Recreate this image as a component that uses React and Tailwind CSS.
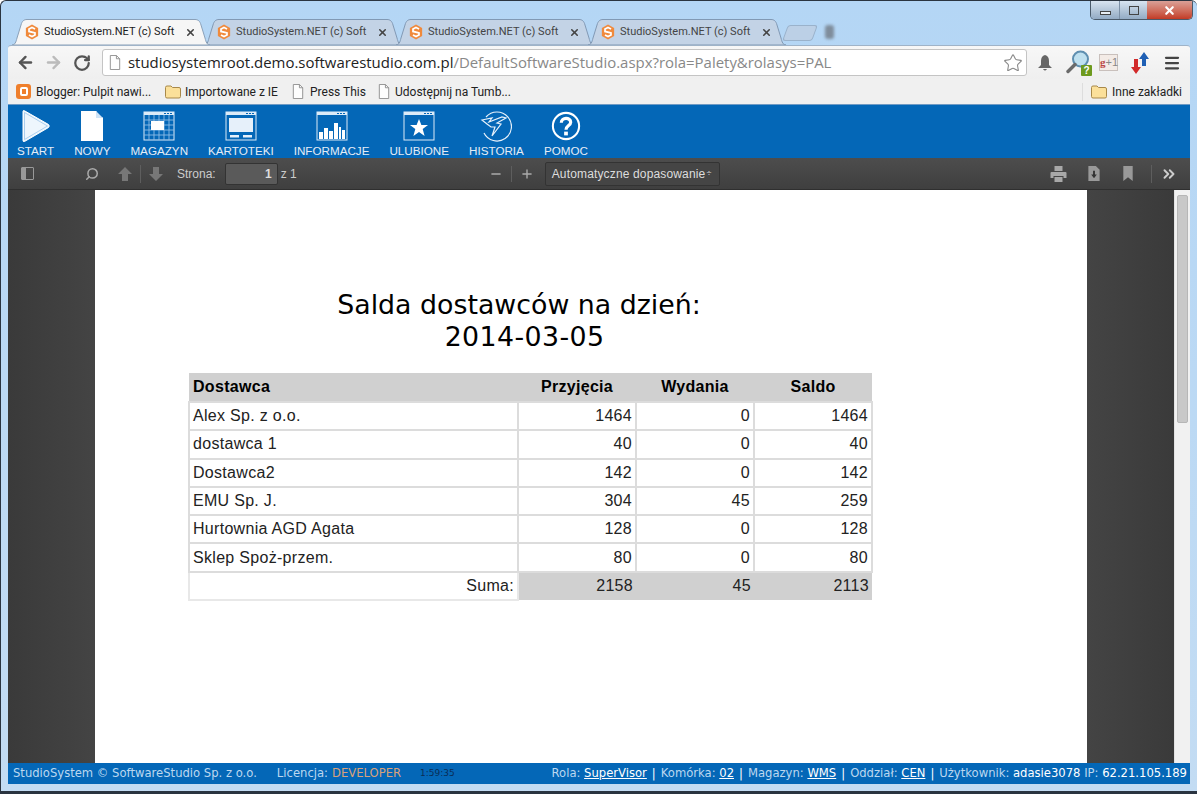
import React from "react";
import { ArrowLeft, ArrowRight, RotateCw, Star, Menu, Search, ChevronsRight, Minus, Plus, X } from "lucide-react";

const Logo = () => (
  <svg viewBox="0 0 16 18" className="w-[14px] h-[16px] shrink-0">
    <path d="M8 0.5 15 4.5V13.5L8 17.5 1 13.5V4.5Z" fill="#f08a3c" />
    <path d="M11.5 5.5 8 3.8 4.6 5.6V8.4L11.4 10V12.4L8 14.2 4.5 12.5" fill="none" stroke="#fff" strokeWidth="2" />
  </svg>
);

const PageGlyph = () => (
  <svg viewBox="0 0 12 16" className="w-[12px] h-[15px] shrink-0">
    <path d="M1 .5H7.5L11 4V15.5H1Z" fill="#fdfdfd" stroke="#8f8f8f" />
    <path d="M7.5 .5V4H11" fill="none" stroke="#8f8f8f" />
  </svg>
);

const FolderGlyph = () => (
  <svg viewBox="0 0 16 14" className="w-[16px] h-[14px] shrink-0">
    <path d="M.5 2.5Q.5 1 2 1H6L7.5 2.5H14Q15.5 2.5 15.5 4V11.5Q15.5 13 14 13H2Q.5 13 .5 11.5Z" fill="#fbe09a" stroke="#a8894a" />
  </svg>
);

const Tab = ({ active }) => (
  <div className={`relative h-[26px] w-[198px] -mr-[6px] flex items-center pl-[13px] pr-[14px] gap-[5px] ${active ? "z-10" : ""}`}>
    <svg viewBox="0 0 198 26" className="absolute inset-0 w-full h-full" preserveAspectRatio="none">
      <path
        d="M0 26C3 26 4 23 5 19L9 6C10 2 12 .5 15 .5H183C186 .5 188 2 189 6L193 19C194 23 195 26 198 26Z"
        fill={active ? "#f6f6f6" : "#c3d3e6"}
        stroke={active ? "#8aa0b8" : "#8199b4"}
      />
    </svg>
    <div className="relative"><Logo /></div>
    <span
      className={`relative w-[138px] whitespace-nowrap text-[11px] ${active ? "text-[#1b1b1b]" : "text-[#444]"}`}
      style={{ fontFamily: "Roboto, 'Noto Sans', sans-serif" }}
    >
      StudioSystem.NET (c) Soft
    </span>
    <X className="relative w-[11px] h-[11px] text-[#444] shrink-0" strokeWidth={3.5} />
  </div>
);

const WindowBox = ({ children }) => (
  <svg viewBox="0 0 32 32" className="w-[32px] h-[32px]">
    <rect x="1" y="2" width="30" height="28" fill="#0467b7" stroke="#dcebf8" />
    <rect x="1" y="2" width="30" height="3" fill="#dcebf8" />
    <path d="M21 3.5h2M24 3.5h2M27 3.5h2" stroke="#0467b7" strokeWidth="1.2" />
    {children}
  </svg>
);

const StartIcon = () => (
  <svg viewBox="0 0 30 34" className="w-[30px] h-[34px]">
    <path d="M2 2.5Q2 1 3.5 1.8L27.5 15.5Q29 17 27.5 18.5L3.5 32.5Q2 33 2 31.5Z" fill="#eef6fd" stroke="#fff" strokeWidth="1" />
    <path d="M3.5 3.5 26.5 17 3.5 30.5Z" fill="none" stroke="#8fbde6" strokeWidth=".7" />
  </svg>
);
const NewIcon = () => (
  <svg viewBox="0 0 24 32" className="w-[24px] h-[32px]">
    <path d="M1 1H16L23 8V31H1Z" fill="#fff" />
    <path d="M17 1V7H23Z" fill="#0467b7" />
    <path d="M16 1 23 8H16Z" fill="#cfe4f7" />
  </svg>
);
const MagazynIcon = () => (
  <WindowBox>
    <path d="M1 10H31M1 15H31M1 20H31M1 25H31M6 5V30M11 5V30M16 5V30M21 5V30M26 5V30" stroke="#8fbde6" strokeWidth=".9" />
    <rect x="8" y="11" width="13" height="9" fill="#fff" />
  </WindowBox>
);
const KartotekiIcon = () => (
  <WindowBox>
    <rect x="4" y="8" width="24" height="14" fill="#e6f0fa" />
    <rect x="5" y="25" width="9" height="2.5" fill="#e6f0fa" />
    <rect x="18" y="25" width="9" height="2.5" fill="#e6f0fa" />
  </WindowBox>
);
const InfoIcon = () => (
  <WindowBox>
    <path d="M3 29V22H7V29ZM8 29V18H12V29ZM13 29V21H17V29ZM18 29V13H22V29ZM23 29V17H25V29ZM26 29V20H29V29Z" fill="#fff" />
  </WindowBox>
);
const StarIcon = () => (
  <WindowBox>
    <path d="M16 9 18.4 15H25L19.7 19 21.6 26 16 22 10.4 26 12.3 19 7 15H13.6Z" fill="#fff" />
  </WindowBox>
);
const HistoryIcon = () => (
  <svg viewBox="0 0 32 34" className="w-[32px] h-[34px]" fill="none" stroke="#e6f0fa" strokeWidth="1.2">
    <path d="M6 8A14.5 14.5 0 1 1 4 24" />
    <path d="M2 11 12 9 9 13 22 8 26 9 17 14 21 15 12 27 15 18 11 18 7 15Z" fill="#0467b7" />
  </svg>
);
const HelpIcon = () => (
  <svg viewBox="0 0 32 32" className="w-[30px] h-[30px]">
    <circle cx="16" cy="16" r="14" fill="#0467b7" stroke="#fff" strokeWidth="2.2" />
    <path d="M11 12.5C11 6.5 21 6.5 21 12C21 15.5 16 15.5 16 20" fill="none" stroke="#fff" strokeWidth="3.4" />
    <rect x="14" y="22" width="4" height="4" fill="#fff" />
  </svg>
);

const navItems = [
  { label: "START", icon: <StartIcon /> },
  { label: "NOWY", icon: <NewIcon /> },
  { label: "MAGAZYN", icon: <MagazynIcon /> },
  { label: "KARTOTEKI", icon: <KartotekiIcon /> },
  { label: "INFORMACJE", icon: <InfoIcon /> },
  { label: "ULUBIONE", icon: <StarIcon /> },
  { label: "HISTORIA", icon: <HistoryIcon /> },
  { label: "POMOC", icon: <HelpIcon /> },
];

const rows = [
  ["Alex Sp. z o.o.", 1464, 0, 1464],
  ["dostawca 1", 40, 0, 40],
  ["Dostawca2", 142, 0, 142],
  ["EMU Sp. J.", 304, 45, 259],
  ["Hurtownia AGD Agata", 128, 0, 128],
  ["Sklep Spoż-przem.", 80, 0, 80],
];

const ToolArrow = ({ down }) => (
  <svg viewBox="0 0 14 14" className={`w-[14px] h-[14px] ${down ? "rotate-180" : ""}`}>
    <path d="M7 0 14 7H10V14H4V7H0Z" fill="#777" />
  </svg>
);

const App = () => {
  return (
    <div
      className="relative w-[1197px] h-[794px] overflow-hidden flex flex-col bg-gradient-to-b from-[#b4d6f5] to-[#c3dcf3] border-t border-l border-[#2a3440] rounded-t-[6px]"
      style={{ fontFamily: "'Liberation Sans', Arial, sans-serif" }}
    >
      {/* window buttons */}
      <div className="absolute top-0 right-[4px] flex h-[19px] w-[103px] rounded-b-[5px] border border-t-0 border-[#4a5a6a] overflow-hidden">
        <div className="w-[28px] flex items-end justify-center pb-[4px] bg-gradient-to-b from-[#d8e4f0] to-[#93abc4]">
          <div className="w-[11px] h-[4px] border border-[#444] bg-[#e8eef4]" />
        </div>
        <div className="w-[28px] flex items-center justify-center bg-gradient-to-b from-[#d8e4f0] to-[#93abc4] border-l border-[#7c90a6]">
          <div className="w-[10px] h-[9px] border border-[#444]" />
        </div>
        <div className="flex-1 flex items-center justify-center bg-gradient-to-b from-[#d9a097] to-[#c23a25]">
          <X className="w-[13px] h-[13px] text-white" strokeWidth={4} />
        </div>
      </div>

      {/* tabs */}
      <div className="h-[44px] shrink-0 flex items-end pl-[11px]">
        <Tab active />
        <Tab />
        <Tab />
        <Tab />
        <div className="w-[30px] h-[16px] mb-[4px] ml-[5px] rounded-[3px] -skew-x-[20deg] bg-[#bcd0e6] border border-[#9ab2cb]" />
        <div className="w-[9px] h-[14px] mb-[6px] ml-[10px] rounded-[3px] bg-[#7f8d9c] blur-[1.5px]" />
      </div>

      <div className="flex-1 mx-[7px] flex flex-col min-h-0">
        {/* browser toolbar */}
        <div className="h-[34px] shrink-0 flex items-center bg-gradient-to-b from-[#f7f7f7] to-[#efefef] rounded-t-[3px] border-t border-[#9fb3c8] pl-[8px] pr-[6px]">
          <ArrowLeft className="w-[19px] h-[19px] text-[#555]" strokeWidth={3} />
          <ArrowRight className="w-[19px] h-[19px] ml-[9px] text-[#bbb]" strokeWidth={3} />
          <RotateCw className="w-[18px] h-[18px] ml-[10px] text-[#555]" strokeWidth={3} />
          <div className="ml-[11px] w-[925px] h-[27px] flex items-center bg-white border border-[#c4c4c4] rounded-[3px] pl-[6px] pr-[3px]">
            <PageGlyph />
            <span className="ml-[7px] text-[14.95px] text-[#222] whitespace-nowrap" style={{ fontFamily: "'Open Sans', sans-serif" }}>
              studiosystemroot.demo.softwarestudio.com.pl
              <span className="text-[#888]">/DefaultSoftwareStudio.aspx?rola=Palety&amp;rolasys=PAL</span>
            </span>
            <Star className="ml-auto w-[20px] h-[20px] text-[#888]" strokeWidth={1.3} />
          </div>
          <svg viewBox="0 0 14 16" className="ml-[11px] w-[14px] h-[16px]">
            <path d="M7 0Q11 1 11 6V10L14 13H0L3 10V6Q3 1 7 0ZM5 14H9Q7 17 5 14Z" fill="#666" />
          </svg>
          <div className="relative ml-[14px] w-[26px] h-[26px]">
            <svg viewBox="0 0 24 24" className="w-[24px] h-[24px]">
              <circle cx="14.5" cy="9" r="7.5" fill="#bfe0ef" stroke="#5f8fb0" strokeWidth="2" />
              <path d="M9 14.5 2 21.5" stroke="#6a6a6a" strokeWidth="3.4" strokeLinecap="round" />
            </svg>
            <span className="absolute right-0 bottom-0 w-[11px] h-[11px] rounded-[1px] bg-[#6d9a1e] text-white text-[10px] font-bold leading-[11px] text-center">?</span>
          </div>
          <div className="ml-[7px] w-[19px] h-[17px] bg-[#f3ebe6] border border-[#c9c0bc] text-[11px] leading-[15px] text-center text-[#888] whitespace-nowrap">
            <span className="font-bold text-[#b44]" style={{ fontFamily: "'Liberation Serif', serif" }}>g</span>+1
          </div>
          <svg viewBox="0 0 18 22" className="ml-[13px] w-[18px] h-[22px]">
            <path d="M13 0 18 7H15V14H11V7H8Z" fill="#1f5fb4" />
            <path d="M5 22 0 15H3V7H7V15H10Z" fill="#d22a2a" />
          </svg>
          <Menu className="ml-[14px] w-[18px] h-[18px] text-[#444]" strokeWidth={3} />
        </div>

        {/* bookmarks */}
        <div className="h-[26px] shrink-0 flex items-center bg-[#f0f0f0] border-b border-[#6f9ac4] pl-[8px] pr-[8px] text-[12px] text-[#222]" style={{ fontFamily: "Roboto, 'Noto Sans', sans-serif" }}>
          <span className="w-[15px] h-[15px] rounded-[3px] bg-[#ef7f2c] flex items-center justify-center">
            <span className="w-[8px] h-[9px] rounded-[2px] border-2 border-white" />
          </span>
          <span className="ml-[5px] w-[115px] whitespace-nowrap">Blogger: Pulpit nawi...</span>
          <span className="ml-[14px]"><FolderGlyph /></span>
          <span className="ml-[4px] w-[94px] whitespace-nowrap">Importowane z IE</span>
          <span className="ml-[13px]"><PageGlyph /></span>
          <span className="ml-[6px] w-[54px] whitespace-nowrap">Press This</span>
          <span className="ml-[14px]"><PageGlyph /></span>
          <span className="ml-[5px] whitespace-nowrap">Udostępnij na Tumb...</span>
          <span className="ml-auto pl-[8px] border-l border-[#ddd] flex items-center gap-[5px]">
            <FolderGlyph />
            Inne zakładki
          </span>
        </div>

        {/* app nav */}
        <div className="h-[53px] shrink-0 flex items-start gap-[20px] bg-[#0467b7] pl-[9px] pt-[3px]">
          {navItems.map((item) => (
            <div key={item.label} className="flex flex-col items-center">
              <div className="h-[35px] flex items-center justify-center">{item.icon}</div>
              <span className="mt-[1px] text-[11.66px] leading-[13px] text-[#e4edf6] whitespace-nowrap">{item.label}</span>
            </div>
          ))}
        </div>

        {/* pdf toolbar */}
        <div className="h-[32px] shrink-0 flex items-center bg-gradient-to-b from-[#4d4d4d] to-[#3f3f3f] border-b border-[#2f2f2f] text-[12px] text-[#ccc] pl-[13px] pr-[12px]">
          <div className="w-[13px] h-[13px] border border-[#999] rounded-[1px] flex">
            <div className="w-[4px] bg-[#999]" />
          </div>
          <Search className="ml-[51px] w-[14px] h-[14px] -scale-x-100 text-[#aaa]" strokeWidth={2.6} />
          <span className="ml-[19px]"><ToolArrow /></span>
          <div className="ml-[8px] w-px h-[18px] bg-[#5e5e5e]" />
          <span className="ml-[8px]"><ToolArrow down /></span>
          <span className="ml-[14px]">Strona:</span>
          <div className="ml-[9px] w-[53px] h-[22px] rounded-[2px] bg-[#5a5a5a] border border-[#333] flex items-center justify-end pr-[5px] font-bold text-[#ddd]">1</div>
          <span className="ml-[3px]">z 1</span>
          <Minus className="ml-[192px] w-[14px] h-[14px] text-[#aaa]" strokeWidth={2.4} />
          <div className="ml-[8px] w-px h-[16px] bg-[#5e5e5e]" />
          <Plus className="ml-[8px] w-[14px] h-[14px] text-[#aaa]" strokeWidth={2.4} />
          <div className="ml-[11px] w-[175px] h-[24px] rounded-[2px] bg-[#454545] border border-[#333] flex items-center pl-[6px] whitespace-nowrap text-[#ddd] tracking-[0.15px]">
            Automatyczne dopasowanie
            <span className="text-[9px] ml-[1px] leading-none">÷</span>
          </div>
          <svg viewBox="0 0 16 16" className="ml-auto w-[17px] h-[16px]">
            <path d="M4 0H12V5H4ZM1 6H15Q16 6 16 7V12H13V10H3V12H0V7Q0 6 1 6ZM4 11H12V16H4Z" fill="#a8a8a8" />
          </svg>
          <svg viewBox="0 0 12 16" className="ml-[21px] w-[12px] h-[15px]">
            <path d="M0 0H8L12 4V16H0Z" fill="#999" />
            <path d="M5 5H7V9H9L6 13 3 9H5Z" fill="#333" />
          </svg>
          <svg viewBox="0 0 10 16" className="ml-[23px] w-[10px] h-[15px]">
            <path d="M0 0H10V16L5 12 0 16Z" fill="#999" />
          </svg>
          <div className="ml-[18px] w-px h-[18px] bg-[#5e5e5e]" />
          <ChevronsRight className="ml-[8px] w-[18px] h-[18px] text-[#ccc]" strokeWidth={2.6} />
        </div>

        {/* document area */}
        <div className="h-[573px] shrink-0 flex overflow-hidden">
          <div className="w-[87px] bg-gradient-to-r from-[#3a3a3a] to-[#444]" />
          <div className="w-[992px] bg-white pl-[93px] pt-[99px]">
            <div className="w-[683px] pr-[21px] text-center text-[26.8px] leading-[32px] text-black" style={{ fontFamily: "'DejaVu Sans', Verdana, sans-serif" }}>
              <div>Salda dostawców na dzień:</div>
              <div className="pl-[11px] tracking-[0.4px]">2014-03-05</div>
            </div>
            <table className="mt-[20px] w-[683px] border-collapse table-fixed text-[16px] tracking-[0.3px] text-[#222]">
              <colgroup>
                <col className="w-[329px]" />
                <col className="w-[118px]" />
                <col className="w-[118px]" />
                <col className="w-[118px]" />
              </colgroup>
              <thead>
                <tr className="h-[29px] bg-[#d0d0d0] font-bold text-black">
                  <th className="text-left pl-[4px]">Dostawca</th>
                  <th>Przyjęcia</th>
                  <th>Wydania</th>
                  <th>Saldo</th>
                </tr>
              </thead>
              <tbody>
                {rows.map((row) => (
                  <tr key={row[0]} className="h-[28.3px]">
                    {row.map((cell, i) => (
                      <td key={i} className={`border-2 border-[#dcdcdc] ${i === 0 ? "text-left pl-[3px]" : "text-right pr-[3px]"}`}>
                        {cell}
                      </td>
                    ))}
                  </tr>
                ))}
                <tr className="h-[28.3px]">
                  <td className="border-2 border-[#e8e8e8] text-right pr-[3px]">Suma:</td>
                  <td className="bg-[#d0d0d0] text-right pr-[3px]">2158</td>
                  <td className="bg-[#d0d0d0] text-right pr-[3px]">45</td>
                  <td className="bg-[#d0d0d0] text-right pr-[3px]">2113</td>
                </tr>
              </tbody>
            </table>
          </div>
          <div className="w-[87px] bg-gradient-to-r from-[#444] to-[#3a3a3a]" />
          <div className="flex-1 bg-[#f1f1f1] px-[2px] pt-[5px] border-l border-[#e2e2e2]">
            <div className="h-[228px] rounded-[2px] bg-[#c8c8c8] border border-[#b6b6b6]" />
          </div>
        </div>

        {/* status bar */}
        <div
          className="h-[21px] shrink-0 flex items-center bg-[#0467b7] pl-[5px] pr-[3px] text-[11.6px] text-[#bcd8f0] whitespace-nowrap"
          style={{ fontFamily: "'DejaVu Sans', Verdana, sans-serif" }}
        >
          <span>StudioSystem © SoftwareStudio Sp. z o.o.</span>
          <span className="ml-[20px]">Licencja:</span>
          <span className="ml-[4px] text-[#d9a27a]">DEVELOPER</span>
          <span className="ml-[19px] text-[9px] text-[#0a2d55]">1:59:35</span>
          <span className="ml-auto">Rola: <u className="text-white">SuperVisor</u></span>
          <span className="mx-[5px] text-white">|</span>
          <span>Komórka: <u className="text-white">02</u></span>
          <span className="mx-[5px] text-white">|</span>
          <span>Magazyn: <u className="text-white">WMS</u></span>
          <span className="mx-[5px] text-white">|</span>
          <span>Oddział: <u className="text-white">CEN</u></span>
          <span className="mx-[5px] text-white">|</span>
          <span>Użytkownik: <span className="text-white">adasie3078</span> IP: <span className="text-white">62.21.105.189</span></span>
        </div>
      </div>

      {/* bottom edge of the window */}
      <div className="absolute bottom-0 left-0 right-0 h-[3px] bg-[#2a3440]" />
    </div>
  );
};

export default App;
